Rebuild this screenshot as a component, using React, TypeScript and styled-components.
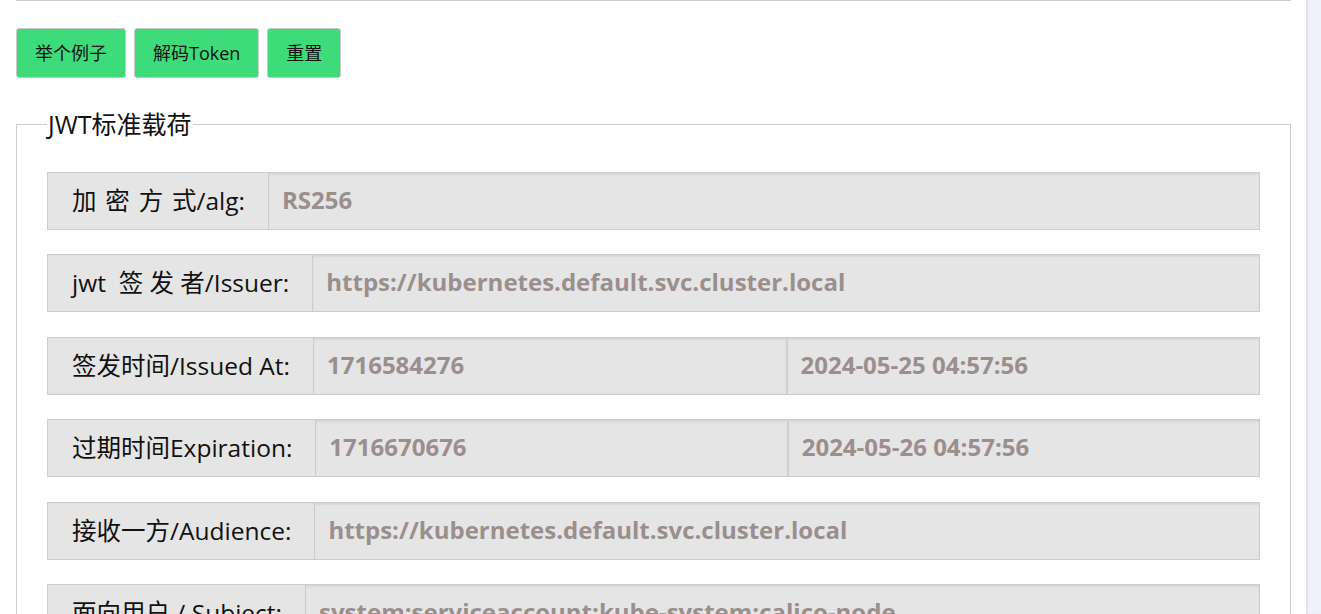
import React from "react";
import styled, { createGlobalStyle } from "styled-components";

const GlobalStyle = createGlobalStyle`
  html, body {
    margin: 0;
    padding: 0;
    height: 100%;
    overflow: hidden;
    background: #ffffff;
  }
  body {
    font-family: "Open Sans", "Noto Sans CJK SC", sans-serif;
    color: #111;
  }
`;

const Shell = styled.div`
  display: flex;
  height: 100vh;
  overflow: hidden;
`;

const Main = styled.main`
  flex: 1;
  padding: 0 15px 0 16px;
  background: #fff;
`;

const Side = styled.aside`
  width: 15px;
  flex-shrink: 0;
  background: #eff3f9;
  box-shadow: inset 2px 0 2px rgba(0, 0, 0, 0.06);
`;

const TopRule = styled.div`
  border-top: 1px solid #cccccc;
`;

const Toolbar = styled.div`
  display: flex;
  gap: 8px;
  margin-top: 27px;
`;

const Button = styled.button`
  height: 50px;
  padding: 0 18px 2px;
  background: #3ddb7a;
  border: 1px solid #c9c9c9;
  border-radius: 3px;
  font-family: "Open Sans", "Noto Sans CJK SC", sans-serif;
  font-size: 18px;
  color: #111;
  cursor: pointer;
`;

const Fieldset = styled.fieldset`
  margin: 32px 0 0;
  padding: 34px 30px 0 30px;
  border: 1px solid #cccccc;
  min-width: 0;
`;

const Legend = styled.legend`
  margin-left: 0;
  padding: 0 1px;
  font-size: 25px;
  line-height: 28px;
  color: #111;
`;

const Rows = styled.div`
  display: flex;
  flex-direction: column;
  gap: 24.4px;
`;

const Row = styled.div`
  display: flex;
  height: 58px;
  border: 1px solid #cccccc;
  background: #e5e5e5;
  box-sizing: border-box;
`;

const Label = styled.div`
  display: flex;
  align-items: center;
  padding: 0 23px 3px 24px;
  font-size: 24.5px;
  color: #111;
  white-space: pre;
  border-right: 1px solid #cccccc;
  flex-shrink: 0;
`;

const Value = styled.div`
  flex: 1;
  display: flex;
  align-items: center;
  padding: 0 13px 3px;
  font-size: 24px;
  font-weight: 700;
  color: #9a8f8d;
  background: #e5e5e5;
  box-shadow: inset 0 2px 2px rgba(0, 0, 0, 0.06);
  white-space: nowrap;
  overflow: hidden;
  & + & {
    border-left: 2px solid #d0d0d0;
  }
`;

type Field = { label: string; values: string[] };

const fields: Field[] = [
  { label: "加 \u200a密 \u200a方 \u200a式/alg:", values: ["RS256"] },
  { label: "jwt  签 发 者/Issuer:", values: ["https://kubernetes.default.svc.cluster.local"] },
  { label: "签发时间/Issued At:", values: ["1716584276", "2024-05-25 04:57:56"] },
  { label: "过期时间Expiration:", values: ["1716670676", "2024-05-26 04:57:56"] },
  { label: "接收一方/Audience:", values: ["https://kubernetes.default.svc.cluster.local"] },
  { label: "面向用户 / Subject:", values: ["system:serviceaccount:kube-system:calico-node"] },
];

export default function App() {
  return (
    <>
      <GlobalStyle />
      <Shell>
        <Main>
          <TopRule />
          <Toolbar>
            <Button>举个例子</Button>
            <Button>解码Token</Button>
            <Button>重置</Button>
          </Toolbar>
          <Fieldset>
            <Legend>JWT标准载荷</Legend>
            <Rows>
              {fields.map((f) => (
                <Row key={f.label}>
                  <Label>{f.label}</Label>
                  {f.values.map((v) => (
                    <Value key={v}>{v}</Value>
                  ))}
                </Row>
              ))}
            </Rows>
          </Fieldset>
        </Main>
        <Side />
      </Shell>
    </>
  );
}
